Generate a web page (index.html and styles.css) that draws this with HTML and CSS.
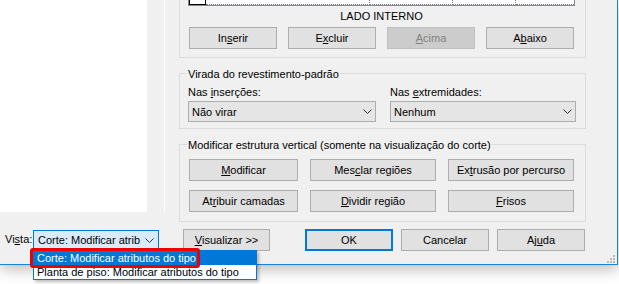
FILE: index.html
```html
<!DOCTYPE html>
<html lang="pt">
<head>
<meta charset="utf-8">
<title>Modificar atributos do tipo</title>
<link rel="stylesheet" href="styles.css">
</head>
<body>
<div class="dialog">
  <div class="main">
    <div class="preview"></div>
    <div class="splitter"></div>
    <div class="panel">
      <div class="group g1">
        <div class="grid">
          <div class="cell head"></div>
          <div class="cell c1"></div>
          <div class="cell c2"></div>
          <div class="cell c3"></div>
          <div class="cell c4"></div>
        </div>
        <div class="side">LADO INTERNO</div>
        <div class="btnrow four">
          <button class="btn w88">In<u>s</u>erir</button>
          <button class="btn w88">E<u>x</u>cluir</button>
          <button class="btn w88 disabled"><u>A</u>cima</button>
          <button class="btn w88">A<u>b</u>aixo</button>
        </div>
      </div>
      <div class="group g2">
        <div class="title">Virada do revestimento-padrão</div>
        <div class="cols">
          <div class="col col1">
            <div class="label">Nas <u>i</u>nserções:</div>
            <div class="combo"><span>Não virar</span><svg class="chev" width="9" height="5" viewBox="0 0 9 5"><polyline points="0.5,0.5 4.5,4.5 8.5,0.5" fill="none" stroke="#333" stroke-width="1"/></svg></div>
          </div>
          <div class="col col2">
            <div class="label">Nas <u>e</u>xtremidades:</div>
            <div class="combo"><span>Nenhum</span><svg class="chev" width="9" height="5" viewBox="0 0 9 5"><polyline points="0.5,0.5 4.5,4.5 8.5,0.5" fill="none" stroke="#333" stroke-width="1"/></svg></div>
          </div>
        </div>
      </div>
      <div class="group g3">
        <div class="title">Modificar estrutura vertical (somente na visualização do corte)</div>
        <div class="btnrow three">
          <button class="btn wa"><u>M</u>odificar</button>
          <button class="btn wb">Mes<u>c</u>lar regiões</button>
          <button class="btn wb">Ex<u>t</u>rusão por percurso</button>
        </div>
        <div class="btnrow three second">
          <button class="btn wa">At<u>r</u>ibuir camadas</button>
          <button class="btn wb"><u>D</u>ividir região</button>
          <button class="btn wb"><u>F</u>risos</button>
        </div>
      </div>
    </div>
  </div>
  <div class="footer">
    <div class="vlabel">Vi<u>s</u>ta:</div>
    <div class="vcombo"><span>Corte: Modificar atrib</span><svg class="chev" width="9" height="5" viewBox="0 0 9 5"><polyline points="0.5,0.5 4.5,4.5 8.5,0.5" fill="none" stroke="#333" stroke-width="1"/></svg></div>
    <button class="btn wv"><u>V</u>isualizar &gt;&gt;</button>
    <button class="btn w88 ok">OK</button>
    <button class="btn w88 gap8">Cancelar</button>
    <button class="btn w88 gap8">Aj<u>u</u>da</button>
  </div>
  <svg class="grip" width="9" height="9" viewBox="0 0 9 9">
    <rect x="7" y="1" width="2" height="2" fill="#b8b8b8"/>
    <rect x="4" y="4" width="2" height="2" fill="#b8b8b8"/>
    <rect x="7" y="4" width="2" height="2" fill="#b8b8b8"/>
    <rect x="1" y="7" width="2" height="2" fill="#b8b8b8"/>
    <rect x="4" y="7" width="2" height="2" fill="#b8b8b8"/>
    <rect x="7" y="7" width="2" height="2" fill="#b8b8b8"/>
  </svg>
  <div class="droplist">
    <div class="opt sel">Corte: Modificar atributos do tipo</div>
    <div class="opt">Planta de piso: Modificar atributos do tipo</div>
  </div>
  <div class="redbox"></div>
</div>
</body>
</html>
```

FILE: styles.css
```css
* { box-sizing: border-box; }
html, body { margin: 0; padding: 0; }
body {
  width: 619px;
  height: 284px;
  overflow: hidden;
  background: #fff;
  font-family: "Liberation Sans", Arial, sans-serif;
  font-size: 11px;
  color: #000;
}
u { text-decoration: underline; text-underline-offset: 1px; }

.dialog {
  position: relative;
  width: 618px;
  height: 265px;
  background: #f0f0f0;
  border-right: 1px solid #1883d7;
  border-bottom: 1px solid #1883d7;
  box-shadow: 0 4px 14px rgba(0, 0, 0, 0.28);
}

.main { display: flex; align-items: flex-start; height: 222px; }
.preview { width: 147px; height: 212px; background: #fff; }
.splitter { width: 18px; height: 212px; border-right: 1px solid #fff; }
.panel { margin-left: 14px; width: 407px; }

.group { border: 1px solid #dcdcdc; }
.g1 { border-top: none; height: 58px; padding: 0 0 0 8px; }
.g2 { margin-top: 15px; padding: 0 9px 6px 8px; }
.g3 { margin-top: 15px; padding: 0 9px 9px 8px; }

.title {
  width: fit-content;
  margin: -7px 0 0 -1px;
  padding: 0 1px;
  line-height: 14px;
  background: #f0f0f0;
}

.grid {
  display: flex;
  width: 387px;
  height: 6px;
  background: #fff;
  border: 1px solid #828790;
  border-top: none;
}
.cell { height: 5px; border-right: 1px dotted #7a7a7a; border-bottom: 1px dotted #7a7a7a; }
.cell.head { width: 17px; border: 1px solid #000; border-top: none; }
.cell.c1 { width: 164px; }
.cell.c2 { width: 83px; }
.cell.c3 { width: 63px; }
.cell.c4 { width: 58px; border-right: none; }

.side { width: 387px; text-align: center; line-height: 13px; margin-top: 4px; }

.btnrow { display: flex; padding-left: 1px; }
.btnrow.four { gap: 11px; margin-top: 4px; }
.btnrow.three { gap: 12px; margin-top: 7px; }
.btnrow.three.second { margin-top: 9px; }

.btn {
  height: 22px;
  margin: 0;
  padding: 0;
  background: #e1e1e1;
  border: 1px solid #adadad;
  font: inherit;
  color: #000;
  display: flex;
  align-items: center;
  justify-content: center;
}
.btn.disabled { background: #cccccc; border-color: #bfbfbf; color: #838383; }
.w88 { width: 88px; }
.wa { width: 109px; }
.wb { width: 126px; }
.wv { width: 87px; margin-left: 24px; }
.btn.ok { margin-left: 35px; border: 2px solid #0078d7; }
.gap8 { margin-left: 8px; }

.cols { display: flex; gap: 14px; }
.col1 { width: 188px; }
.col2 { width: 186px; }
.label { line-height: 14px; margin-top: 4px; }
.combo {
  height: 21px;
  margin-top: 2px;
  border: 1px solid #adadad;
  background: #e5e5e5;
  display: flex;
  align-items: center;
  justify-content: space-between;
  padding: 0 3px 0 3px;
}
.chev { display: block; }

.footer { display: flex; align-items: flex-start; margin-top: 7px; padding-left: 5px; }
.vlabel { width: 28px; line-height: 21px; }
.vcombo {
  width: 126px;
  height: 20px;
  margin-top: 1px;
  border: 1px solid #0078d7;
  background: #d9ebf9;
  display: flex;
  align-items: center;
  justify-content: space-between;
  padding: 0 4px 0 4px;
}

.grip { position: absolute; right: 2px; bottom: 1px; }

.droplist {
  position: absolute;
  left: 33px;
  top: 250px;
  width: 224px;
  height: 30px;
  background: #fff;
  border: 1px solid #0078d7;
  box-shadow: 2px 2px 3px rgba(0, 0, 0, 0.25);
}
.opt { height: 14px; line-height: 14px; padding-left: 3px; white-space: nowrap; }
.opt.sel { background: #0078d7; color: #fff; }
.opt + .opt { line-height: 15px; }

.redbox {
  position: absolute;
  left: 30px;
  top: 248px;
  width: 170px;
  height: 20px;
  border: 3px solid #ee0000;
  border-radius: 3px;
}
```
